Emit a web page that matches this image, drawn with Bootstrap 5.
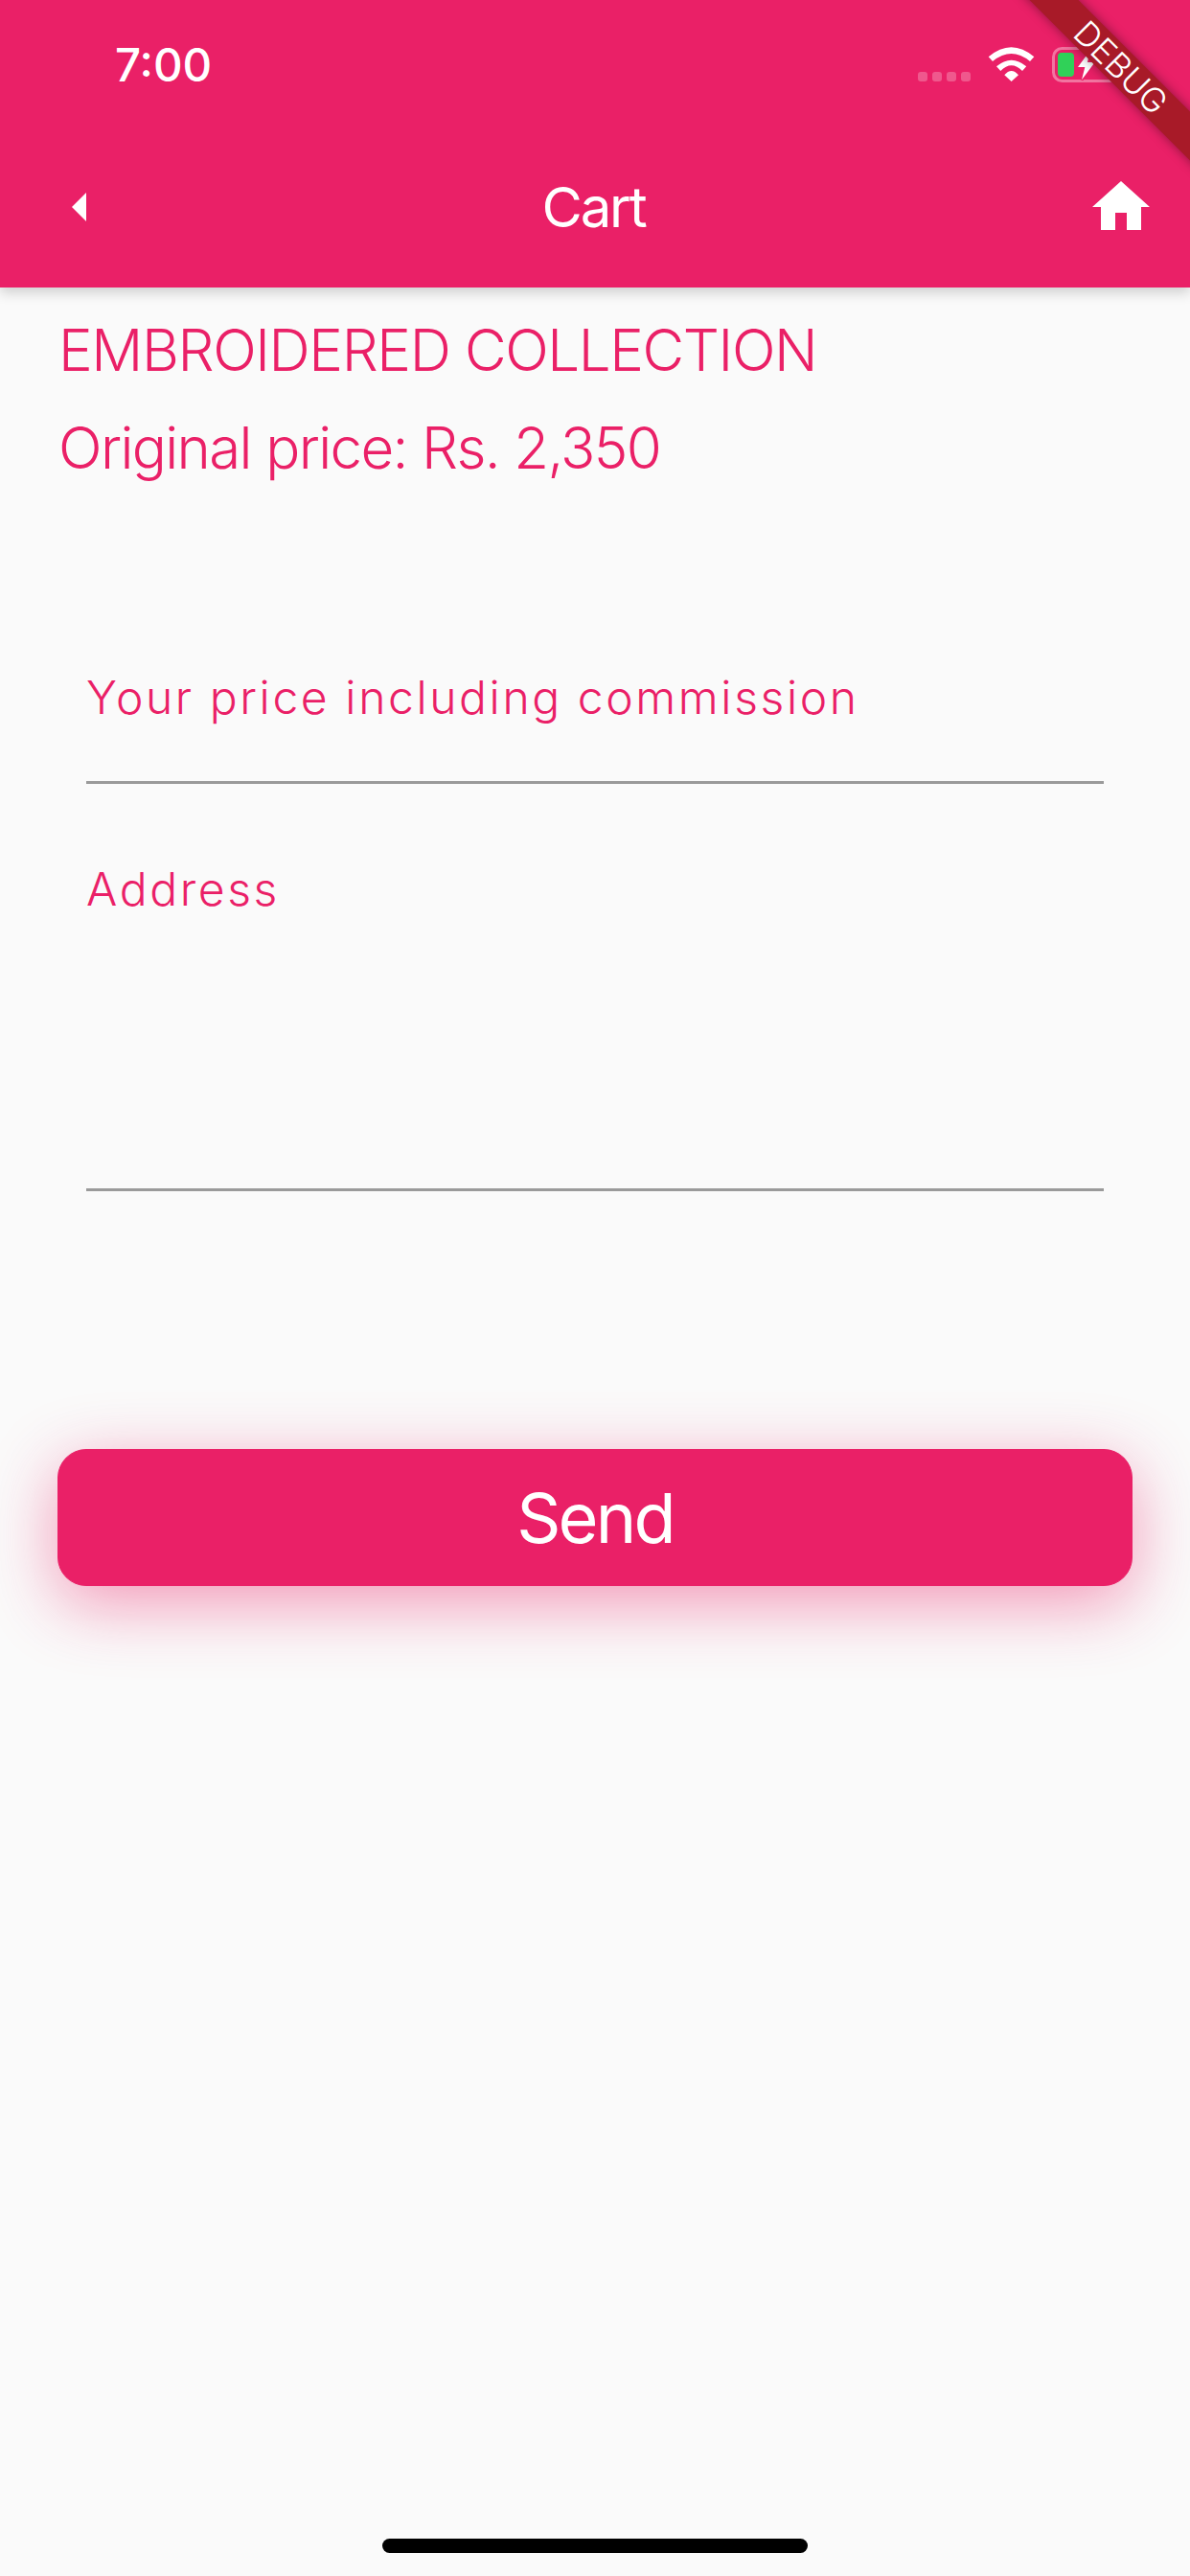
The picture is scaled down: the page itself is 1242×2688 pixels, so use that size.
<!DOCTYPE html>
<html lang="en">
<head>
<meta charset="utf-8">
<title>Cart</title>
<link href="https://cdn.jsdelivr.net/npm/bootstrap@5.3.0/dist/css/bootstrap.min.css" rel="stylesheet">
<style>
html, body { height: 100%; }
body { background: #fafafa; font-family: Inter, "Liberation Sans", sans-serif; overflow: hidden; }
.app-frame { width: 1242px; height: 2688px; }
.app-head { background: #ea2067; color: #fff; box-shadow: 0 6px 12px rgba(0,0,0,.16); }
.status-strip { height: 132px; padding: 0 72px 0 120px; }
.clock { font-size: 47.500px; font-weight: 500; line-height: 1; margin-top: 4px; }
.status-svg { position: relative; left: 8px; top: 5px; }
.title-strip { height: 168px; padding: 0 36px; }
.page-title { font-size: 58px; font-weight: 400; letter-spacing: -2.2px; line-height: 1; margin: 0 3px 0 0; }
.ico-72 { width: 72px; height: 72px; fill: #fff; display: block; }
.ico-back { margin-left: 12px; margin-right: -12px; }
.product-info { padding: 29px 0 0 61px; color: #ea2067; font-size: 60px; letter-spacing: -1.650px; font-weight: 300; }
.product-info p { margin: 0 0 30px; line-height: 72px; }
.product-info p:first-child { letter-spacing: -1.400px; }
.field-wrap { padding: 0 90px; margin-top: 136px; }
.under-field { display: block; border-bottom: 3px solid #9a9a9a; color: #ea2067; font-size: 48px; letter-spacing: 2.6px; font-weight: 300; line-height: 54px; }
.f-price { height: 179px; padding-top: 62px; }
.f-address { height: 425px; padding-top: 83px; }
.send-wrap { padding: 0 60px; margin-top: 269px; }
.send-btn { --bs-btn-bg: #ea2067; --bs-btn-border-color: #ea2067; --bs-btn-color: #fff; --bs-btn-hover-bg: #ea2067; --bs-btn-hover-color:#fff; height: 143px; width: 100%; border-radius: 30px; font-size: 72px; letter-spacing: -2.8px; box-shadow: 0 18px 70px rgba(234,32,103,.45); padding: 0; }
.home-pill { position: fixed; left: 399px; top: 2649px; width: 444px; height: 15px; border-radius: 8px; background: #000; }
.debug-band { position: absolute; top: 0; right: 0; width: 220px; height: 220px; overflow: hidden; pointer-events: none; }
.debug-band-inner { position: absolute; left: 0; top: 0; width: 340px; height: 36px; line-height: 36px; transform: translate(-24px, 50px) rotate(45deg); background: #a81a28; color: #fff; text-align: center; text-indent: 6px; font-size: 35px; font-weight: 300; letter-spacing: 0; box-shadow: 0 0 12px rgba(0,0,0,.4); }
</style>
</head>
<body>
<div class="app-frame position-relative">
  <header class="app-head position-relative">
    <div class="status-strip d-flex align-items-center justify-content-between">
      <span class="clock">7:00</span>
      <svg class="status-svg" width="220" height="50" viewBox="0 0 220 50" fill="none">
        <g fill="#fff" fill-opacity=".25">
          <rect x="0" y="29" width="10" height="10" rx="3"/><rect x="15" y="29" width="10" height="10" rx="3"/><rect x="30" y="29" width="10" height="10" rx="3"/><rect x="45" y="29" width="10" height="10" rx="3"/>
        </g>
        <path fill="#fff" d="M73.700 13.300 Q97.500 -6.700 121.300 13.300 L117 18 Q97.500 2 78 18 Z M82 23.300 Q97.600 10.100 113.200 23.300 L109 28 Q97.600 16.600 86.300 28 Z M90.300 32.300 Q97.600 23.700 105 32.300 L97.600 39 Z"/>
        <rect x="141.500" y="4.500" width="68" height="34" rx="9" stroke="#fff" stroke-opacity=".38" stroke-width="3"/>
        <rect x="146" y="9" width="17" height="25" rx="4" fill="#30d158"/>
        <path fill="#fff" stroke="#ea2067" stroke-width="3" paint-order="stroke" d="M179.300 7.300 L167 24 L174.300 24 L171 37.300 L184.700 19 L177 19 Z"/>
      </svg>
    </div>
    <nav class="title-strip d-flex align-items-center justify-content-between">
      <svg class="ico-72 ico-back" viewBox="0 0 24 24"><path d="M14 7l-5 5 5 5V7z"/></svg>
      <h1 class="page-title">Cart</h1>
      <svg class="ico-72" viewBox="0 0 24 24"><path d="M10 20v-6h4v6h5v-8h3L12 3 2 12h3v8z"/></svg>
    </nav>
  </header>
  <section class="product-info">
    <p>EMBROIDERED COLLECTION</p>
    <p>Original price: Rs. 2,350</p>
  </section>
  <form class="field-wrap">
    <label class="under-field f-price">Your price including commission</label>
    <label class="under-field f-address">Address</label>
  </form>
  <div class="send-wrap">
    <button type="button" class="btn send-btn">Send</button>
  </div>
  <div class="home-pill"></div>
  <div class="debug-band"><div class="debug-band-inner">DEBUG</div></div>
</div>
<script src="https://cdn.jsdelivr.net/npm/bootstrap@5.3.0/dist/js/bootstrap.bundle.min.js"></script>
</body>
</html>
